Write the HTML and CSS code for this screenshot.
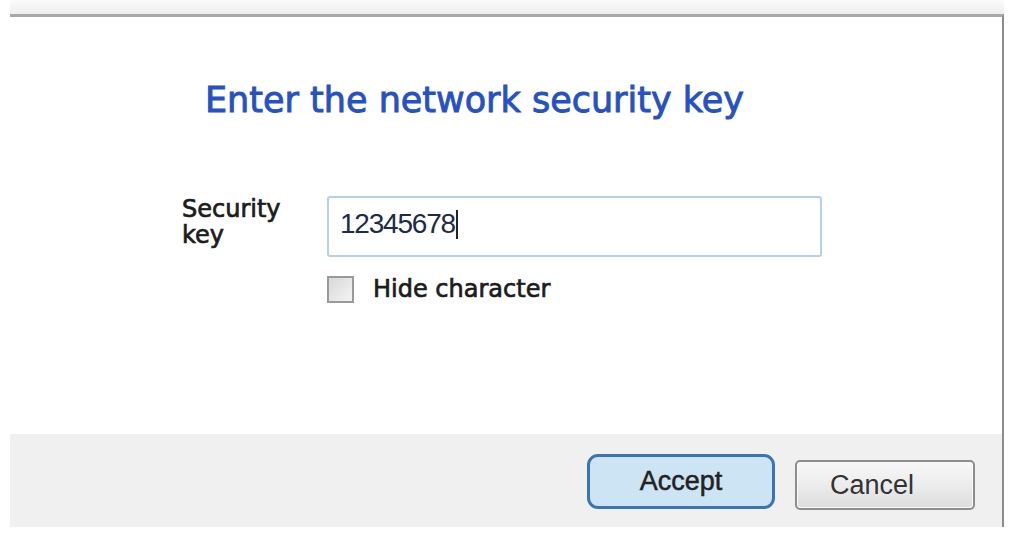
FILE: index.html
```html
<!DOCTYPE html>
<html lang="en">
<head>
<meta charset="utf-8">
<title>Enter the network security key</title>
<link rel="stylesheet" href="styles.css">
</head>
<body>
<div class="window">
  <div class="titlebar"></div>
  <div class="frame">
    <div class="content">
      <h1 class="heading">Enter the network security key</h1>
      <div class="field-row">
        <label class="field-label">Security<br>key</label>
        <div class="field-col">
          <div class="input"><span class="input-text">12345678</span><span class="caret"></span></div>
          <label class="check"><span class="box"></span><span class="check-text">Hide character</span></label>
        </div>
      </div>
    </div>
    <div class="footer">
      <button class="btn btn-primary">Accept</button>
      <button class="btn btn-secondary">Cancel</button>
    </div>
  </div>
</div>
</body>
</html>
```
FILE: styles.css
```css
html, body {
  margin: 0;
  padding: 0;
  background: #ffffff;
}

.window {
  width: 994px;
  margin-left: 10px;
}

.titlebar {
  height: 14px;
  background: linear-gradient(#fbfbfb, #eeeeee);
}

.frame {
  border-top: 3px solid #a9a9a9;
  border-right: 2px solid #8c8c8c;
  display: flex;
  flex-direction: column;
}

.content {
  height: 417px;
  box-sizing: border-box;
  padding: 63px 0 0 172px;
  background: #ffffff;
}

.heading {
  margin: 0 0 0 23px;
  font-family: "DejaVu Sans", sans-serif;
  font-weight: normal;
  font-size: 35px;
  line-height: 40px;
  color: #2751c2;
  -webkit-text-stroke: 0.9px #2751c2;
}

.field-row {
  display: flex;
  margin-top: 76px;
}

.field-label {
  width: 145px;
  font-family: "DejaVu Sans", sans-serif;
  font-size: 24px;
  line-height: 26px;
  color: #1c1c1c;
  -webkit-text-stroke: 0.7px #1c1c1c;
}

.field-col {
  display: flex;
  flex-direction: column;
}

.input {
  width: 495px;
  height: 61px;
  box-sizing: border-box;
  border: 2px solid #b6d0ea;
  border-radius: 3px;
  padding: 0 0 5px 11px;
  display: flex;
  align-items: center;
  background: #fff;
}

.input-text {
  font-family: "Liberation Sans", Arial, sans-serif;
  font-size: 28px;
  line-height: 52px;
  letter-spacing: -1.2px;
  color: #1e2a4a;
}

.caret {
  width: 2px;
  height: 29px;
  margin-left: 1px;
  background: #222;
}

.check {
  display: flex;
  align-items: flex-start;
  margin-top: 19px;
}

.box {
  width: 27px;
  height: 27px;
  box-sizing: border-box;
  border: 2px solid #9a9a9a;
  background: linear-gradient(135deg, #d8d8d8, #f4f4f4);
  margin-right: 19px;
}

.check-text {
  font-family: "DejaVu Sans", sans-serif;
  font-size: 24px;
  line-height: 26px;
  color: #1c1c1c;
  -webkit-text-stroke: 0.7px #1c1c1c;
}

.footer {
  height: 93px;
  box-sizing: border-box;
  background: #f0f0f0;
  display: flex;
  justify-content: flex-end;
  align-items: flex-end;
  gap: 20px;
  padding: 0 27px 17px 0;
}

.btn {
  font-family: "Liberation Sans", Arial, sans-serif;
  font-size: 27px;
  color: #222;
  margin: 0;
  cursor: default;
}

.btn-primary {
  width: 188px;
  height: 55px;
  margin-bottom: 1px;
  border: 3px solid #3b74b4;
  border-radius: 11px;
  background: #cde4f4;
  -webkit-text-stroke: 0.5px #222;
}

.btn-secondary {
  width: 180px;
  height: 50px;
  border: 2px solid #8d8d8d;
  border-radius: 5px;
  padding: 0 26px 0 0;
  background: linear-gradient(#f8f8f8, #ececec 50%, #dcdcdc);
  box-shadow: inset 0 0 0 1px #fafafa;
  color: #333;
}
```
